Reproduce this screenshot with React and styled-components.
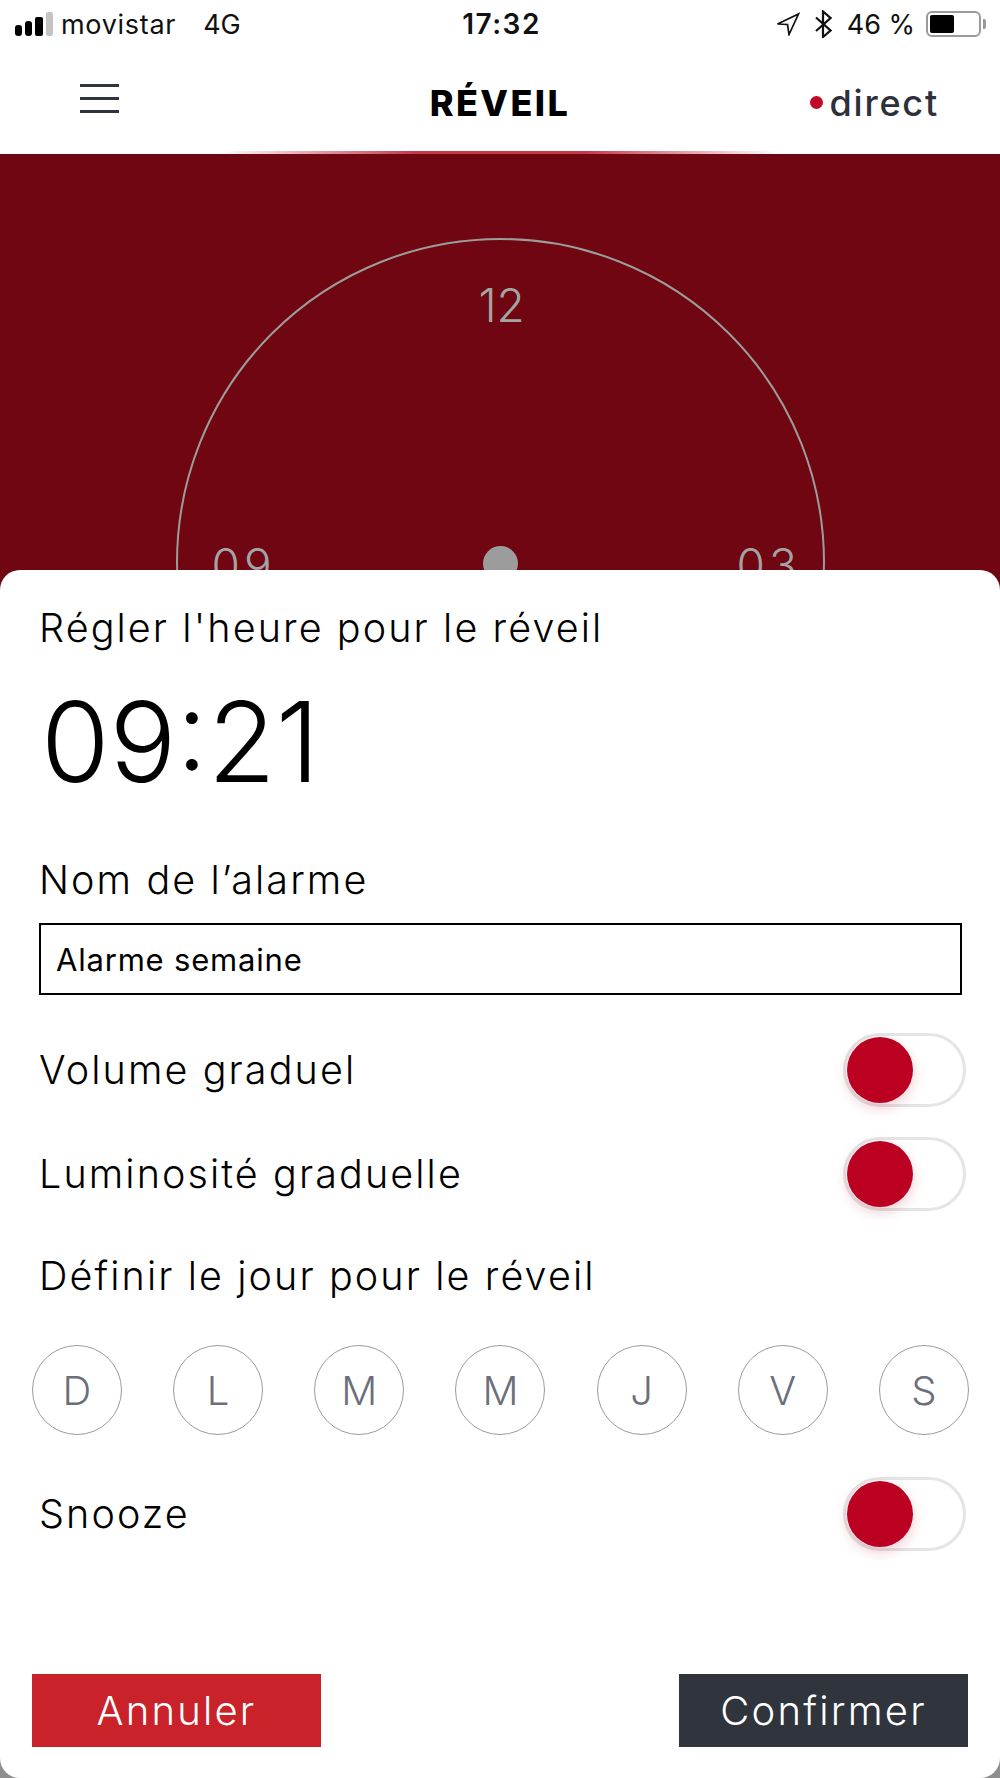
import React from 'react';
import styled, { createGlobalStyle } from 'styled-components';

const GlobalStyle = createGlobalStyle`
  * {
    box-sizing: border-box;
  }

  body {
    margin: 0;
    background: #8f8f8f;
    font-family: "Inter", "Liberation Sans", sans-serif;
  }
`;

const Screen = styled.div`
  width: 1000px;
  height: 1778px;
  overflow: hidden;
  display: flex;
  flex-direction: column;
  background: #8f8f8f;
`;

const StatusBar = styled.div`
  height: 48px;
  flex: none;
  background: #fff;
  display: grid;
  grid-template-columns: 1fr auto 1fr;
  align-items: center;
  padding: 0 19px 0 15px;
  color: #111;
  font-size: 27px;
`;

const StatusLeft = styled.div`
  display: flex;
  align-items: center;
  gap: 8px;
`;

const Carrier = styled.span`
  margin-right: 19px;
  letter-spacing: 0.7px;
`;

const Clock = styled.span`
  font-weight: 600;
  font-size: 28px;
  letter-spacing: 1.5px;
  margin-left: 7px;
`;

const StatusRight = styled.div`
  display: flex;
  align-items: center;
  justify-content: flex-end;
  gap: 15px;
`;

const Battery = styled.div`
  width: 55px;
  height: 26px;
  margin-left: -4px;
  border: 2px solid #9a9a9a;
  border-radius: 6px;
  padding: 2px;
  position: relative;

  &::before {
    content: '';
    display: block;
    height: 100%;
    width: 24px;
    background: #000;
    border-radius: 2px;
  }

  &::after {
    content: '';
    position: absolute;
    right: -7px;
    top: 6px;
    width: 3px;
    height: 10px;
    background: #9a9a9a;
    border-radius: 0 2px 2px 0;
  }
`;

const NavBar = styled.header`
  height: 106px;
  flex: none;
  background: #fff;
  display: grid;
  grid-template-columns: 1fr auto 1fr;
  align-items: center;
  padding: 3px 61px 0;
  position: relative;

  &::after {
    content: '';
    position: absolute;
    left: 220px;
    right: 220px;
    bottom: 0;
    height: 3px;
    background: linear-gradient(to right, rgba(200, 57, 74, 0), #c8394a 35%, #c8394a 65%, rgba(200, 57, 74, 0));
  }
`;

const MenuButton = styled.div`
  width: 39px;
  display: flex;
  flex-direction: column;
  gap: 10px;
  margin: -9px 0 0 19px;

  span {
    display: block;
    height: 3px;
    background: #30343c;
  }
`;

const NavTitle = styled.h1`
  margin: 0;
  font-size: 36px;
  font-weight: 800;
  letter-spacing: 2.4px;
  color: #000;
`;

const LiveLink = styled.div`
  justify-self: end;
  display: flex;
  align-items: center;
  gap: 6px;
  font-size: 36px;
  font-weight: 500;
  letter-spacing: 1.8px;
  color: #2d2f3a;
`;

const LiveDot = styled.span`
  width: 13px;
  height: 13px;
  border-radius: 50%;
  background: #c00a27;
`;

const Hero = styled.section`
  height: 436px;
  flex: none;
  background: #6f0612;
  overflow: hidden;
  display: flex;
  justify-content: center;
  padding-top: 84px;
`;

const Dial = styled.div`
  width: 649px;
  height: 649px;
  flex: none;
  border: 2px solid #9c9c9c;
  border-radius: 50%;
  position: relative;
`;

const Hour = styled.span`
  position: absolute;
  top: ${(p) => p.$top}px;
  left: ${(p) => p.$left}px;
  font-size: 46px;
  font-weight: 300;
  line-height: 1;
  letter-spacing: ${(p) => p.$spacing || 0}px;
  color: #a4a4a4;
`;

const Pivot = styled.span`
  position: absolute;
  top: 306px;
  left: 305px;
  width: 35px;
  height: 35px;
  border-radius: 50%;
  background: #9c9c9c;
`;

const Sheet = styled.main`
  flex: 1;
  margin-top: -20px;
  background: #fff;
  border-radius: 20px;
  padding: 0 32px;
  display: flex;
  flex-direction: column;
  position: relative;
  color: #000;
`;

const Label = styled.div`
  font-size: 39.5px;
  font-weight: 300;
  line-height: 44px;
  letter-spacing: 2.1px;
  padding-left: 7px;
`;

const TimeLabel = styled(Label)`
  margin-top: 36px;
`;

const TimeValue = styled.div`
  font-size: 111px;
  font-weight: 300;
  line-height: 110px;
  padding-left: 9px;
  margin-top: 37px;
`;

const NameLabel = styled(Label)`
  margin-top: 61px;
`;

const NameInput = styled.div`
  margin: 21px 6px 0 7px;
  height: 72px;
  border: 2px solid #000;
  display: flex;
  align-items: center;
  padding-left: 15px;
  font-size: 31px;
  letter-spacing: 0.8px;
`;

const ToggleRow = styled.div`
  display: flex;
  align-items: center;
  justify-content: space-between;
  height: 74px;
  margin-top: ${(p) => p.$gap}px;
`;

const Toggle = styled.div`
  width: 123px;
  height: 74px;
  border: 3px solid #e5e5e5;
  border-radius: 37px;
  background: #fff;
  position: relative;
  margin-right: 2px;

  &::before {
    content: '';
    position: absolute;
    left: 1px;
    top: 1px;
    width: 66px;
    height: 66px;
    border-radius: 50%;
    background: #bb0022;
    box-shadow: 0 5px 14px rgba(187, 0, 34, 0.2);
  }
`;

const DaysLabel = styled(Label)`
  margin-top: 43px;
`;

const DayRow = styled.div`
  display: flex;
  justify-content: space-between;
  margin: 47px -1px 0 0;
`;

const Day = styled.div`
  width: 90px;
  height: 90px;
  border: 1px solid #9b9b9b;
  border-radius: 50%;
  display: flex;
  align-items: center;
  justify-content: center;
  font-size: 40px;
  font-weight: 300;
  color: #6c6f7a;
`;

const Actions = styled.div`
  margin-top: auto;
  margin-bottom: 31px;
  display: flex;
  justify-content: space-between;
`;

const ActionButton = styled.div`
  width: 289px;
  height: 73px;
  display: flex;
  align-items: center;
  justify-content: center;
  background: ${(p) => p.$bg};
  color: #fff;
  font-size: 40px;
  font-weight: 300;
  letter-spacing: 2.2px;
`;

const SignalBars = () => (
  <svg width="38" height="24" viewBox="0 0 38 24">
    <rect x="0" y="13" width="7" height="11" rx="3" fill="#000" />
    <rect x="10" y="9" width="7" height="15" rx="3" fill="#000" />
    <rect x="20" y="5" width="8" height="19" rx="2" fill="#000" />
    <rect x="31" y="0" width="7" height="24" rx="2" fill="#c4c4c4" />
  </svg>
);

const LocationArrow = () => (
  <svg width="24" height="24" viewBox="0 0 24 24" fill="none" stroke="#111" strokeWidth="1.7">
    <path d="M1.5 12 L22.5 2 L13 22.5 L11.5 12.5 Z" />
  </svg>
);

const BluetoothMark = () => (
  <svg width="17" height="28" viewBox="0 0 17 28" fill="none" stroke="#111" strokeWidth="2.2">
    <path d="M1 7.5 L15.5 20.5 L8 27 V1.5 L15.5 8 L1 21" />
  </svg>
);

const days = ['D', 'L', 'M', 'M', 'J', 'V', 'S'];

const App = () => {
  return (
    <Screen>
      <GlobalStyle />
      <StatusBar>
        <StatusLeft>
          <SignalBars />
          <Carrier>movistar</Carrier>
          <span>4G</span>
        </StatusLeft>
        <Clock>17:32</Clock>
        <StatusRight>
          <LocationArrow />
          <BluetoothMark />
          <span>46 %</span>
          <Battery />
        </StatusRight>
      </StatusBar>

      <NavBar>
        <MenuButton>
          <span />
          <span />
          <span />
        </MenuButton>
        <NavTitle>RÉVEIL</NavTitle>
        <LiveLink>
          <LiveDot />
          direct
        </LiveLink>
      </NavBar>

      <Hero>
        <Dial>
          <Hour $top={42} $left={301}>12</Hour>
          <Hour $top={302} $left={34} $spacing={4}>09</Hour>
          <Hour $top={302} $left={559} $spacing={4}>03</Hour>
          <Pivot />
        </Dial>
      </Hero>

      <Sheet>
        <TimeLabel>Régler l'heure pour le réveil</TimeLabel>
        <TimeValue>09:21</TimeValue>
        <NameLabel>Nom de l’alarme</NameLabel>
        <NameInput>Alarme semaine</NameInput>
        <ToggleRow $gap={38}>
          <Label>Volume graduel</Label>
          <Toggle />
        </ToggleRow>
        <ToggleRow $gap={30}>
          <Label>Luminosité graduelle</Label>
          <Toggle />
        </ToggleRow>
        <DaysLabel>Définir le jour pour le réveil</DaysLabel>
        <DayRow>
          {days.map((day, i) => (
            <Day key={i}>{day}</Day>
          ))}
        </DayRow>
        <ToggleRow $gap={42}>
          <Label>Snooze</Label>
          <Toggle />
        </ToggleRow>
        <Actions>
          <ActionButton $bg="#c9222a">Annuler</ActionButton>
          <ActionButton $bg="#30343d">Confirmer</ActionButton>
        </Actions>
      </Sheet>
    </Screen>
  );
};

export default App;
